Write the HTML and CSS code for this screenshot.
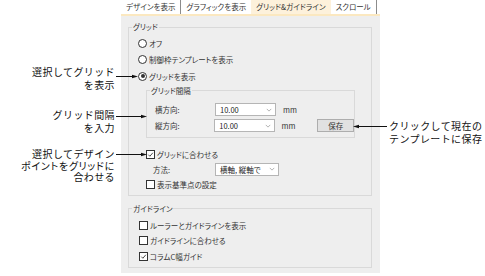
FILE: index.html
```html
<!DOCTYPE html>
<html lang="ja">
<head>
    <meta charset="UTF-8">
    <meta name="viewport" content="width=device-width, initial-scale=1.0">
    <title>グリッド&amp;ガイドライン</title>
    <link rel="stylesheet" href="styles.css">
</head>
<body>
    <div class="page">
        <div class="dialog">
            <div class="tabs">
                <span class="tab sep">デザインを表示</span>
                <span class="tab">グラフィックを表示</span>
                <span class="tab active">グリッド&amp;ガイドライン</span>
                <span class="tab sep">スクロール</span>
                <span class="tab">ア</span>
            </div>
            <div class="dialog-body">
                <fieldset class="group">
                    <legend>グリッド</legend>
                    <div class="group-inner grid-inner">
                        <div class="opt"><span class="radio"></span>オフ</div>
                        <div class="opt"><span class="radio"></span>制御枠テンプレートを表示</div>
                        <div class="opt"><span class="radio on"></span>グリッドを表示</div>

                        <fieldset class="group sub">
                            <legend>グリッド間隔</legend>
                            <div class="group-inner sub-inner">
                                <div class="field">
                                    <span class="lbl">横方向:</span>
                                    <span class="combo">10.00<svg class="chev" viewBox="0 0 8 5"><path d="M1 1l3 3 3-3"/></svg></span>
                                    <span class="unit">mm</span>
                                </div>
                                <div class="field">
                                    <span class="lbl">縦方向:</span>
                                    <span class="combo">10.00<svg class="chev" viewBox="0 0 8 5"><path d="M1 1l3 3 3-3"/></svg></span>
                                    <span class="unit">mm</span>
                                    <span class="btn">保存</span>
                                </div>
                            </div>
                        </fieldset>

                        <div class="opt snap"><span class="check on"><svg viewBox="0 0 8 8"><path d="M1.5 4.2l1.8 1.8 3.4-4"/></svg></span>グリッドに合わせる</div>
                        <div class="field method">
                            <span class="lbl">方法:</span>
                            <span class="combo wide">横軸, 縦軸で<svg class="chev" viewBox="0 0 8 5"><path d="M1 1l3 3 3-3"/></svg></span>
                        </div>
                        <div class="opt snap"><span class="check"></span>表示基準点の設定</div>
                    </div>
                </fieldset>

                <fieldset class="group">
                    <legend>ガイドライン</legend>
                    <div class="group-inner guide-inner">
                        <div class="opt row"><span class="check"></span>ルーラーとガイドラインを表示</div>
                        <div class="opt row"><span class="check"></span>ガイドラインに合わせる</div>
                        <div class="opt row"><span class="check on"><svg viewBox="0 0 8 8"><path d="M1.5 4.2l1.8 1.8 3.4-4"/></svg></span>コラムC幅ガイド</div>
                    </div>
                </fieldset>
            </div>
        </div>

        <!-- callouts -->
        <div class="note left n-show">選択してグリッド<br>を表示</div>
        <div class="note left n-step">グリッド間隔<br>を入力</div>
        <div class="note left n-snap">選択してデザイン<br><span class="kana">ポイントをグリッドに</span><br>合わせる</div>
        <div class="note right n-save">クリックして現在の<br>テンプレートに保存</div>

        <svg class="leaders" viewBox="0 0 485 276">
            <path d="M116 76.5H134M116 116.5H143M116 154.5H143M387 126.5H357"/>
            <polygon points="138,76.5 132,74.8 132,78.2"/>
            <polygon points="147,116.5 141,114.8 141,118.2"/>
            <polygon points="147,154.5 141,152.8 141,156.2"/>
            <polygon points="353,126.5 359,124.8 359,128.2"/>
        </svg>
    </div>
</body>
</html>
```

FILE: styles.css
```css
body {
    margin: 0;
    background-color: #fff;
    font-family: "Noto Sans CJK JP", "Noto Sans", sans-serif;
}
.page {
    position: relative;
    width: 485px;
    height: 276px;
    overflow: hidden;
}
.dialog {
    margin-left: 121px;
    width: 259px;
    height: 273px;
    background-color: #eeeeee;
    color: #333;
    font-size: 7.5px;
    font-feature-settings: "palt";
    display: flex;
    flex-direction: column;
}
.tabs {
    display: flex;
    height: 14px;
    background-color: #fff;
    border-bottom: 2px solid #fbe8c0;
    white-space: nowrap;
    overflow: hidden;
}
.tab {
    padding: 0 5px;
    line-height: 14px;
    flex-shrink: 0;
}
.tab.sep {
    border-right: 1px solid #8c8c8c;
}
.tab.active {
    background-color: #fdf1db;
}
.dialog-body {
    flex: 1;
    padding: 6px 8px 0 7px;
    display: flex;
    flex-direction: column;
    gap: 8px;
}
.group {
    margin: 0;
    padding: 0;
    border: 1px solid #d9d9d9;
    min-width: 0;
}
.group legend {
    margin-left: 3px;
    padding: 0 1px;
    line-height: 10px;
}
.grid-inner {
    padding: 3px 0 3px 9px;
}
.opt {
    display: flex;
    align-items: center;
    height: 16.5px;
    white-space: nowrap;
}
.radio {
    width: 7px;
    height: 7px;
    border: 1px solid #333;
    border-radius: 50%;
    margin-right: 2px;
    background-color: #fff;
    position: relative;
}
.radio.on::after {
    content: "";
    position: absolute;
    left: 1.5px;
    top: 1.5px;
    width: 4px;
    height: 4px;
    border-radius: 50%;
    background-color: #333;
}
.check {
    width: 7px;
    height: 7px;
    border: 1px solid #333;
    margin-right: 2px;
    background-color: #fff;
    display: flex;
}
.check svg {
    width: 7px;
    height: 7px;
    fill: none;
    stroke: #333;
    stroke-width: 1;
}
.sub {
    margin: 1px 16px 0 8px;
}
.sub-inner {
    padding: 6px 0 3px 8px;
}
.field {
    display: flex;
    align-items: center;
    height: 16px;
    white-space: nowrap;
}
.lbl {
    width: 60px;
}
.combo {
    width: 52px;
    height: 11px;
    padding: 0 3px 0 4px;
    background-color: #fff;
    border: 1px solid #b5b5b5;
    display: flex;
    align-items: center;
    justify-content: space-between;
    color: #222;
}
.combo.wide {
    width: 55px;
}
.chev {
    width: 6px;
    height: 4px;
    fill: none;
    stroke: #999;
    stroke-width: 1;
}
.unit {
    margin-left: 7px;
}
.btn {
    margin-left: 22px;
    width: 35px;
    height: 11px;
    line-height: 11px;
    text-align: center;
    background-color: #e1e1e1;
    border: 1px solid #adadad;
}
.snap {
    height: 15px;
    margin-left: 8px;
}
.sub + .snap {
    margin-top: 9px;
}
.method {
    height: 15px;
    padding-left: 15px;
}
.method .lbl {
    width: 62px;
}
.guide-inner {
    padding: 4px 0 3px 10px;
}
.row {
    height: 15.5px;
}
.note {
    position: absolute;
    font-size: 10px;
    line-height: 13px;
    letter-spacing: 0.4px;
    color: #111;
    white-space: nowrap;
}
.note .kana {
    font-feature-settings: "palt";
    letter-spacing: 0.7px;
}
.note.left {
    right: 370px;
    text-align: right;
}
.n-show {
    top: 65px;
}
.n-step {
    top: 108px;
}
.n-snap {
    top: 148px;
    line-height: 11.5px;
}
.n-save {
    left: 389px;
    top: 119px;
}
.leaders {
    position: absolute;
    left: 0;
    top: 0;
    width: 485px;
    height: 276px;
    pointer-events: none;
}
.leaders path {
    fill: none;
    stroke: #111;
    stroke-width: 1;
}
.leaders polygon {
    fill: #111;
}
```
